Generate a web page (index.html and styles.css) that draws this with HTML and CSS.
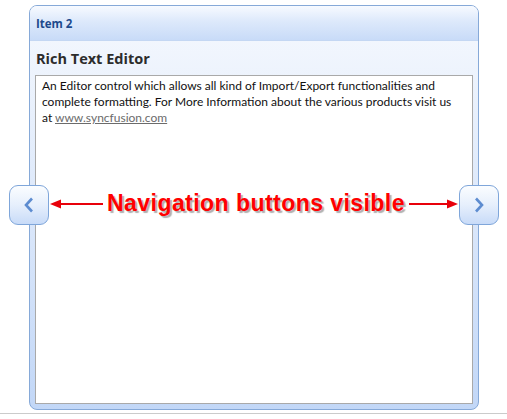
FILE: index.html
```html
<!DOCTYPE html>
<html>
<head>
<meta charset="utf-8">
<link rel="stylesheet" href="styles.css">
</head>
<body>
<div class="stage">
  <div class="card">
    <div class="card-header">Item 2</div>
    <div class="card-body">
      <div class="title">Rich Text Editor</div>
      <div class="editor">
        An Editor control which allows all kind of Import/Export functionalities and complete formatting. For More Information about the various products visit us at <a class="link" href="#">www.syncfusion.com</a>
      </div>
    </div>
  </div>
  <button class="nav nav-prev" aria-label="Previous">
    <svg width="12" height="16" viewBox="0 0 12 16"><path d="M9 1.5 L3 8 L9 14.5" fill="none" stroke="#5d8cd0" stroke-width="2.6"/></svg>
  </button>
  <button class="nav nav-next" aria-label="Next">
    <svg width="12" height="16" viewBox="0 0 12 16"><path d="M3 1.5 L9 8 L3 14.5" fill="none" stroke="#5d8cd0" stroke-width="2.6"/></svg>
  </button>
  <div class="note">
    <svg class="arrow" width="54" height="12" viewBox="0 0 54 12"><path d="M10 6 H54" stroke="#e8000a" stroke-width="2"/><path d="M1 6 L12 1.5 L12 10.5 Z" fill="#e8000a"/></svg>
    <span class="note-text">Navigation buttons visible</span>
    <svg class="arrow" width="50" height="12" viewBox="0 0 50 12"><path d="M0 6 H40" stroke="#e8000a" stroke-width="2"/><path d="M49 6 L38 1.5 L38 10.5 Z" fill="#e8000a"/></svg>
  </div>
</div>
</body>
</html>
```
FILE: styles.css
```css
html, body {
  margin: 0;
  padding: 0;
  background: #ffffff;
}
.stage {
  position: relative;
  height: 414px;
  border-bottom: 1px solid #cbcbcb;
  padding: 5px 0 0 29px;
  box-sizing: border-box;
}
.card {
  width: 450px;
  height: 405px;
  box-sizing: border-box;
  border: 1px solid #86a9d8;
  border-radius: 8px;
  overflow: hidden;
  display: flex;
  flex-direction: column;
  background: linear-gradient(#f6f9fe, #c2d7f7);
}
.card-header {
  height: 35px;
  flex: none;
  box-sizing: border-box;
  padding-left: 6px;
  display: flex;
  align-items: center;
  font-family: "Open Sans", "Liberation Sans", sans-serif;
  font-weight: 700;
  font-size: 11.5px;
  color: #1d4a8c;
  background: linear-gradient(#f7faff, #dde9fb 45%, #c8dbf8);
  border-bottom: 1px solid #c4d7f3;
}
.card-body {
  flex: 1;
  display: flex;
  flex-direction: column;
  padding: 0 5px 5px 5px;
  min-height: 0;
}
.title {
  height: 34px;
  flex: none;
  display: flex;
  align-items: center;
  padding-left: 1px;
  font-family: "Open Sans", "Liberation Sans", sans-serif;
  font-weight: 700;
  font-size: 14.5px;
  color: #2c2c2c;
}
.editor {
  flex: 1;
  background: #ffffff;
  border: 1px solid #a9a9a9;
  padding: 2px 14px 1px 6px;
  font-family: "Lato", "Liberation Sans", sans-serif;
  font-size: 12px;
  line-height: 16px;
  color: #111111;
}
.link {
  color: #6b6b6b;
  text-decoration: underline;
}
.nav {
  position: absolute;
  top: 185px;
  width: 40px;
  height: 40px;
  box-sizing: border-box;
  border: 1px solid #7fa6da;
  border-radius: 9px;
  background: linear-gradient(#fbfdff, #e6effc 50%, #c8dbf8);
  padding: 0;
  display: flex;
  align-items: center;
  justify-content: center;
}
.nav-prev { left: 9px; }
.nav-next { left: 459px; }
.note {
  position: absolute;
  top: 190px;
  left: 49px;
  display: flex;
  align-items: center;
}
.arrow {
  flex: none;
}
.note-text {
  margin: 0 4px;
  font-family: "Liberation Sans", Arial, sans-serif;
  font-weight: 700;
  font-size: 23px;
  letter-spacing: 0.45px;
  color: #ff0000;
  text-shadow: 2px 2px 1px #b0b0b0;
}
```
